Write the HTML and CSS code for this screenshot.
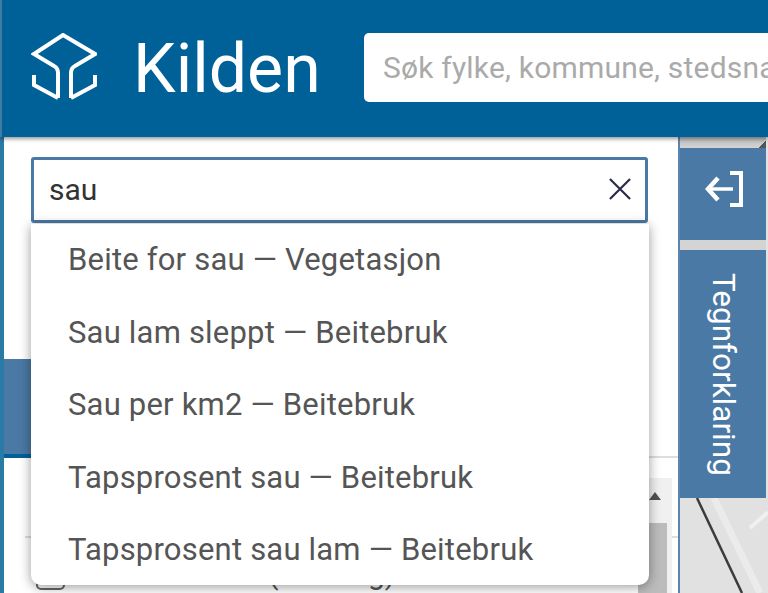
FILE: index.html
```html
<!DOCTYPE html>
<html lang="en">
<head>
  <meta charset="UTF-8" />
  <title>Kilden</title>
  <link rel="stylesheet" href="styles.css">
</head>
<body>
  <header class="topbar">
    <svg class="logo" viewBox="0 0 66 68" fill="none" stroke="#fff" stroke-width="4">
      <path d="M27 65 V40 Q27 35 23 33 L3 21 L32 2 L64 21 L44 33 Q40 35 40 40 V65" />
      <path d="M3 42 V52 L27 65" />
      <path d="M64 42 V52 L40 65" />
    </svg>
    <div class="brand">Kilden</div>
    <div class="site-search">Søk fylke, kommune, stedsnavn</div>
  </header>

  <main class="content">
    <section class="sidebar">
      <div class="layer-search">
        <span class="layer-query">sau</span>
        <svg class="clear-icon" viewBox="0 0 24 24" fill="none" stroke="#2b2b4a" stroke-width="2.4">
          <path d="M1 1 L23 23 M23 1 L1 23" />
        </svg>
      </div>
      <div class="band-row">
        <div class="band"></div>
      </div>
      <div class="list-area">
        <div class="list-rule"></div>
        <div class="list-row">
          <span class="checkbox"></span>
          <span class="list-label">Beiteområder (beitelag)</span>
        </div>
        <div class="scrollbar">
          <div class="scroll-arrow"></div>
          <div class="scroll-thumb"></div>
        </div>
      </div>

      <ul class="suggestions">
        <li>Beite for sau — Vegetasjon</li>
        <li>Sau lam sleppt — Beitebruk</li>
        <li>Sau per km2 — Beitebruk</li>
        <li>Tapsprosent sau — Beitebruk</li>
        <li>Tapsprosent sau lam — Beitebruk</li>
      </ul>
    </section>

    <aside class="side-tabs">
      <div class="tab-column">
        <div class="tab-top-gap"></div>
        <div class="tab tab-collapse">
          <svg class="collapse-icon" viewBox="0 0 38 36" fill="none" stroke="#fff">
            <path d="M3 18 H28" stroke-width="3.5" />
            <path d="M13 7 L3 18 L13 29" stroke-width="4.5" />
            <path d="M25 2 H36 V34 H25" stroke-width="4" />
          </svg>
        </div>
        <div class="tab-gap"></div>
        <div class="tab tab-legend"><span>Tegnforklaring</span></div>
      </div>
      <svg class="map" viewBox="0 0 88 95" preserveAspectRatio="none">
        <path d="M34 0 L80 95" stroke="#ebebeb" stroke-width="7" fill="none" />
        <path d="M17 0 L62 95" stroke="#3c3c3c" stroke-width="2.5" fill="none" />
        <path d="M70 30 L88 14" stroke="#f0f0f0" stroke-width="4" fill="none" />
      </svg>
    </aside>
  </main>
</body>
</html>
```

FILE: styles.css
```css
* {
  box-sizing: border-box;
}
body {
  margin: 0;
  height: 593px;
  overflow: hidden;
  background: #2a7aa6;
  font-family: Roboto, sans-serif;
  color: #444;
}
.topbar {
  display: flex;
  align-items: center;
  height: 137px;
  background: #006199;
  border-left: 2px solid #3f7ba5;
  padding: 0 0 0 29px;
  box-shadow: 0 2px 4px rgba(0,0,0,0.4);
  position: relative;
  z-index: 2;
}
.logo {
  width: 66px;
  height: 68px;
  flex: none;
  margin-top: -3px;
}
.brand {
  margin-left: 36px;
  color: #fff;
  font-size: 68px;
  flex: none;
  width: 231px;
}
.site-search {
  flex: 1;
  height: 69px;
  margin-bottom: 2px;
  line-height: 69px;
  background: #fff;
  border-radius: 5px 0 0 5px;
  padding-left: 19px;
  font-size: 30px;
  letter-spacing: 0.2px;
  color: #aaa;
  white-space: nowrap;
  overflow: hidden;
}
.content {
  display: flex;
  height: 456px;
  margin-left: 4px;
}
.sidebar {
  position: relative;
  display: flex;
  flex-direction: column;
  width: 676px;
  background: #fff;
  border-right: 2px solid #5a86ad;
  padding-top: 20px;
}
.layer-search {
  display: flex;
  align-items: center;
  justify-content: space-between;
  height: 66px;
  margin-left: 27px;
  width: 617px;
  border: 3px solid #4a79a5;
  border-radius: 3px;
  padding: 0 15px 2px;
  font-size: 30px;
  color: #333;
}
.clear-icon {
  width: 22px;
  height: 22px;
  margin-right: -1px;
}
.band-row {
  height: 99px;
  margin-top: 136px;
  border-bottom: 2px solid #ddd;
}
.band {
  width: 300px;
  height: 99px;
  background: #4a79a5;
  border-bottom: 4px solid #006199;
}
.list-area {
  flex: 1;
  position: relative;
  overflow: hidden;
}
.list-rule {
  height: 2px;
  background: #ddd;
  margin-top: 78px;
  margin-left: 21px;
}
.list-row {
  display: flex;
  align-items: flex-start;
  gap: 16px;
  margin: 20px 0 0 32px;
  font-size: 30px;
  line-height: 31px;
  color: #555;
  white-space: nowrap;
}
.checkbox {
  flex: none;
  width: 29px;
  height: 29px;
  margin-top: 3px;
  border: 2px solid #666;
  border-radius: 5px;
}
.scrollbar {
  position: absolute;
  top: 20px;
  right: 6px;
  bottom: 0;
  width: 34px;
  background: #f0f0f0;
}
.scroll-arrow {
  width: 0;
  margin: 14px auto 0;
  border-left: 6px solid transparent;
  border-right: 6px solid transparent;
  border-bottom: 8px solid #505050;
}
.scroll-thumb {
  height: 100px;
  margin-top: 23px;
  margin-right: 5px;
  background: #bcbcbc;
}
.suggestions {
  position: absolute;
  top: 87px;
  left: 27px;
  width: 618px;
  height: 361px;
  margin: 0;
  padding: 0;
  list-style: none;
  background: #fff;
  border-radius: 0 0 10px 10px;
  box-shadow: 0 2px 12px rgba(0,0,0,0.4);
}
.suggestions li {
  height: 72.5px;
  line-height: 72px;
  padding-left: 37px;
  font-size: 31px;
  letter-spacing: 0.2px;
  color: #555;
  white-space: nowrap;
}
.side-tabs {
  position: relative;
  flex: 1;
  display: flex;
  flex-direction: column;
  background: #e3e3e3;
}
.tab-column {
  width: 86px;
}
.tab-top-gap {
  height: 11px;
  background: linear-gradient(135deg, transparent 92%, #555 92%), linear-gradient(#bbb, #d4d4d4);
}
.tab {
  background: #4a79a5;
  display: flex;
  align-items: center;
  justify-content: center;
  color: #fff;
}
.tab-collapse {
  height: 92px;
  padding-bottom: 10px;
}
.collapse-icon {
  width: 38px;
  height: 36px;
  margin-right: -2px;
}
.tab-gap {
  height: 10px;
  background: #d4d4d4;
}
.tab-legend {
  height: 248px;
}
.tab-legend span {
  writing-mode: vertical-rl;
  font-size: 31.5px;
}
.map {
  flex: 1;
  width: 100%;
  background: #e1e1e1;
}
```
